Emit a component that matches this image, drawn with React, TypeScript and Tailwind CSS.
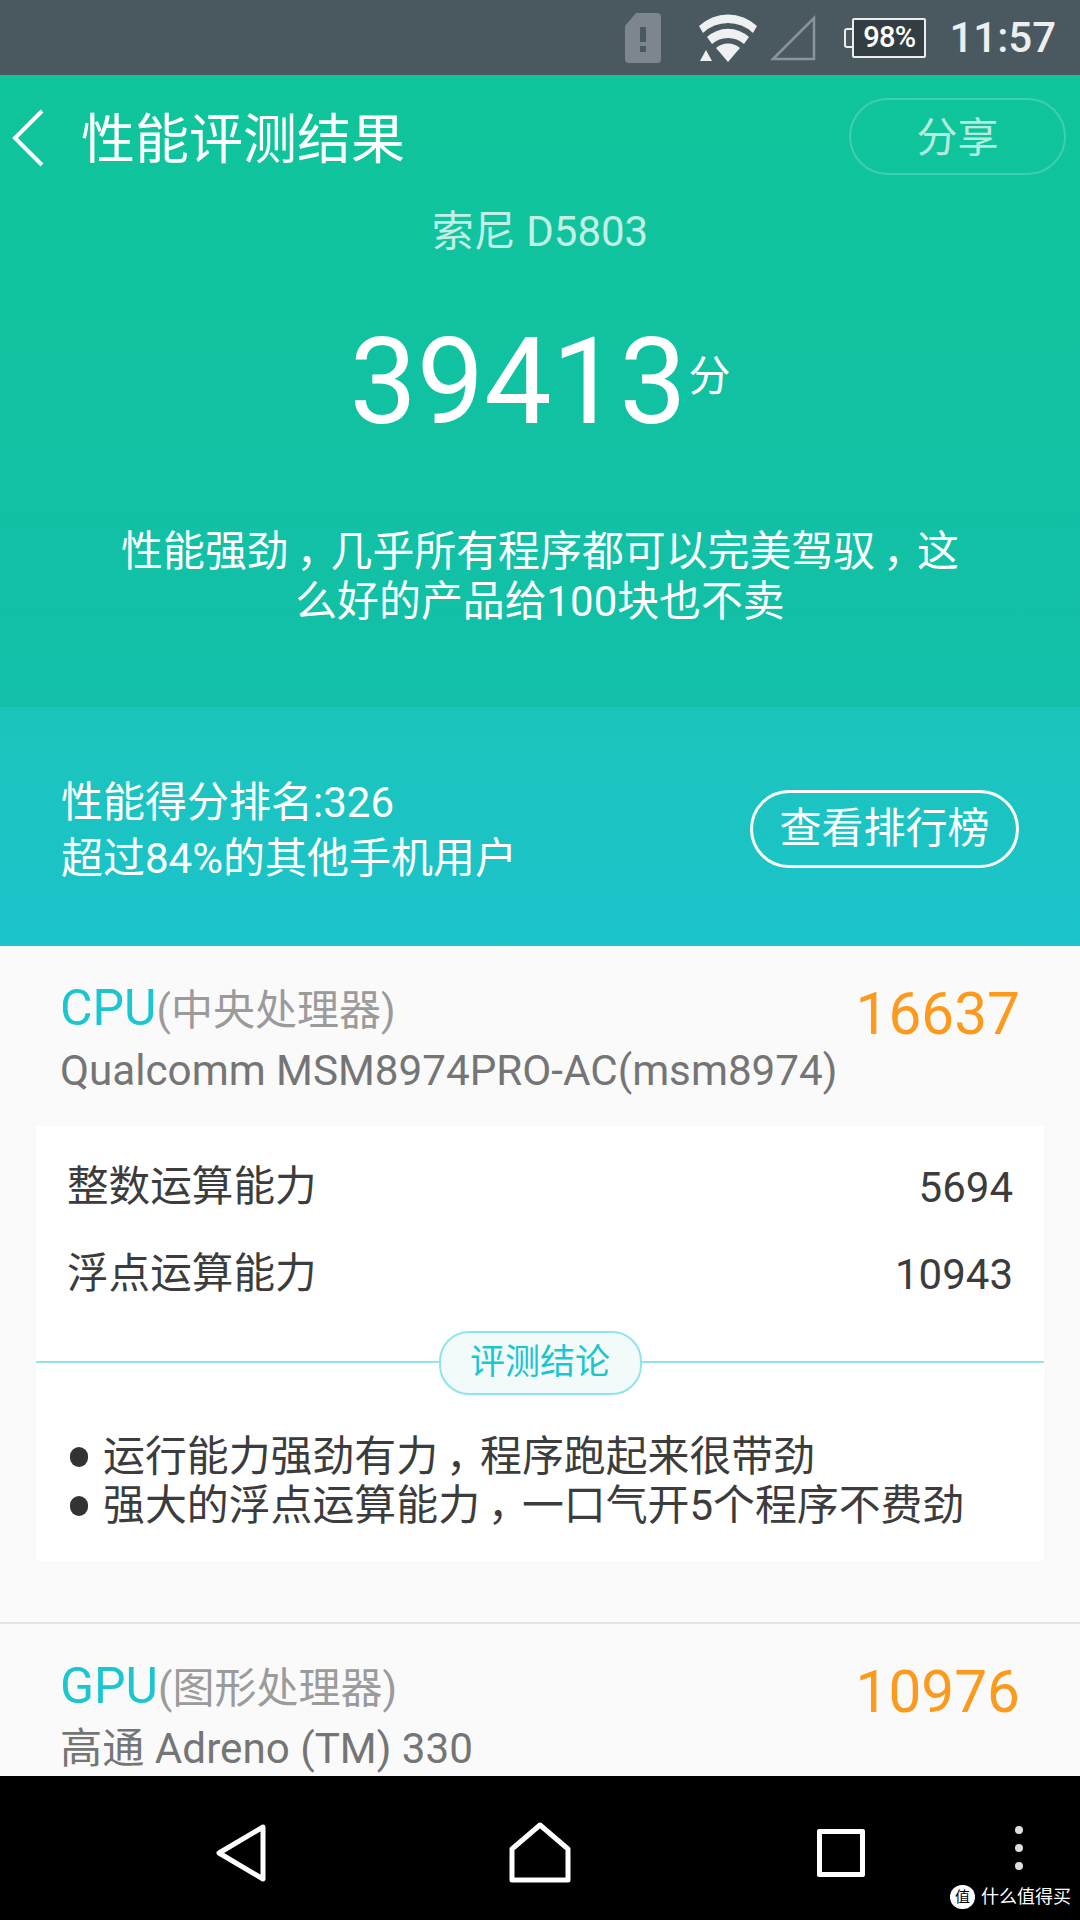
// the source draws the comma mid-cell, SC font puts it bottom-left
function Comma() {
  return <span className="inline-flex w-[1em] justify-center [font-feature-settings:'palt']">，</span>
}

function StatusBar() {
  return (
    <div className="h-[75px] bg-[#4a5860] flex items-center justify-end shrink-0 relative">
      {/* sim warning */}
      <svg width="38" height="52" viewBox="0 0 38 52" className="mr-[36px]">
        <path d="M12 1h21a4 4 0 0 1 4 4v42a4 4 0 0 1-4 4H5a4 4 0 0 1-4-4V14z" fill="#7d868f" />
        <rect x="16" y="15" width="6" height="15" fill="#4a5860" />
        <rect x="16" y="34" width="6" height="6" fill="#4a5860" />
      </svg>
      {/* wifi */}
      <svg width="60" height="50" viewBox="0 0 60 50" className="mr-[12px]">
        <path d="M1 13 A42 42 0 0 1 59 13 L55 20 A36 36 0 0 0 5 20Z" fill="#eef0f1" />
        <path d="M9 24 A31 31 0 0 1 51 24 L46 31 A24 24 0 0 0 14 31Z" fill="#eef0f1" />
        <path d="M18 35 A18 18 0 0 1 42 35 L30 49Z" fill="#eef0f1" />
        <path d="M2 48 L8 37 L14 48Z" fill="#eef0f1" />
      </svg>
      {/* signal */}
      <svg width="46" height="46" viewBox="0 0 46 46" className="mr-[28px]">
        <path d="M3 44 L44 3 V44Z" fill="none" stroke="#8a949a" strokeWidth="2.5" />
      </svg>
      {/* battery */}
      <div className="relative mr-[23px] flex items-center">
        <div className="w-[8px] h-[20px] border-2 border-r-0 border-white/90 rounded-l-[3px]" />
        <div className="w-[74px] h-[40px] bg-[#333e44] border-2 border-white/90 rounded-[2px] flex items-center justify-center text-white text-[29px] font-medium leading-none tracking-tight">
          98%
        </div>
      </div>
      <div className="text-[#eceeef] text-[42px] font-medium leading-none mr-[24px]">11:57</div>
    </div>
  )
}

function Header() {
  return (
    <div className="h-[632px] shrink-0 bg-linear-to-b from-[#0fc59a] to-[#13bfa9] text-white">
      <div className="h-[112px] pt-[23px] pl-[11px] pr-[14px] flex items-start justify-between">
        <div className="flex items-start">
          <svg width="34" height="58" viewBox="0 0 34 58" className="mt-[11px]">
            <path d="M31 2 L4 29 L31 56" fill="none" stroke="white" strokeWidth="4" />
          </svg>
          <div className="ml-[36px] text-[54px] leading-[58px] mt-[14px]">性能评测结果</div>
        </div>
        <div className="w-[217px] h-[77px] rounded-full border-2 border-white/20 flex items-center justify-center text-[41px] text-white/70 pt-[4px]">
          分享
        </div>
      </div>
      <div className="text-center text-[42px] leading-[48px] text-white/75 mt-[21px]">索尼 D5803</div>
      <div className="flex items-start justify-center mt-[56px] h-[140px]">
        <span className="text-[120px] leading-[140px]">39413</span>
        <span className="text-[42px] leading-[48px] mt-[41px] ml-[2px]">分</span>
      </div>
      <div className="mt-[75px] text-center text-[41.9px] leading-[50px]">
        <div>性能强劲<Comma />几乎所有程序都可以完美驾驭<Comma />这</div>
        <div>么好的产品给100块也不卖</div>
      </div>
    </div>
  )
}

function RankBand() {
  return (
    <div className="h-[239px] shrink-0 bg-linear-to-b from-[#1cc5ba] to-[#1bc3cc] flex items-center justify-between pl-[61px] pr-[61px] text-white">
      <div className="text-[42px] leading-[56px] mt-[8px]">
        <div>性能得分排名:326</div>
        <div>超过84%的其他手机用户</div>
      </div>
      <div className="w-[269px] h-[78px] rounded-full border-[3px] border-white flex items-center justify-center text-[42px] mt-[4px]">
        查看排行榜
      </div>
    </div>
  )
}

function SectionHead({ name, sub, model, score }: { name: string; sub: string; model: string; score: string }) {
  return (
    <div className="flex items-start justify-between pl-[60px] pr-[60px]">
      <div>
        <div className="flex items-baseline h-[62px]">
          <span className="text-[50px] leading-[62px] text-[#1cc6cf]">{name}</span>
          <span className="text-[42px] leading-[62px] text-[#9b9b9b]">{sub}</span>
        </div>
        <div className="text-[42.2px] leading-[50px] text-[#757575] mt-[7px]">{model}</div>
      </div>
      <div className="text-[58.5px] leading-[68px] text-[#fb9a1c] mt-[3px]">{score}</div>
    </div>
  )
}

function ScoreRow({ label, value }: { label: string; value: string }) {
  return (
    <div className="h-[87px] flex items-center justify-between pl-[31px] pr-[31px] text-[41.6px] text-[#3c3c3c]">
      <span>{label}</span>
      <span className="text-[42px]">{value}</span>
    </div>
  )
}

export default function App() {
  return (
    <div
      className="w-[1080px] h-[1920px] overflow-hidden flex flex-col bg-[#fafafa]"
      style={{ fontFamily: 'Roboto, "Noto Sans CJK SC", sans-serif' }}
    >
      <StatusBar />
      <div className="flex-1 min-h-0 overflow-hidden flex flex-col">
        <Header />
        <RankBand />
        <div className="pt-[31px]">
          <SectionHead name="CPU" sub="(中央处理器)" model="Qualcomm MSM8974PRO-AC(msm8974)" score="16637" />
          <div className="mx-[36px] mt-[30px] h-[435px] bg-white pt-[18px]">
            <ScoreRow label="整数运算能力" value="5694" />
            <ScoreRow label="浮点运算能力" value="10943" />
            <div className="relative h-[64px] mt-[13px] flex items-center justify-center">
              <div className="absolute left-0 right-0 top-[30px] h-[2px] bg-[#8fe5e8]" />
              <div className="relative w-[203px] h-[64px] rounded-[30px] border-2 border-[#8fe5e8] bg-[#f3fafa] flex items-center justify-center text-[35px] text-[#1cc6cf]">
                评测结论
              </div>
            </div>
            <div className="mt-[37px] text-[41.9px] leading-[49px] text-[#3c3c3c] pl-[34px]">
              <div className="flex items-center">
                <span className="w-[18px] h-[20px] rounded-full bg-[#333] mr-[15px]" />
                <span>运行能力强劲有力<Comma />程序跑起来很带劲</span>
              </div>
              <div className="flex items-center">
                <span className="w-[18px] h-[20px] rounded-full bg-[#333] mr-[15px]" />
                <span>强大的浮点运算能力<Comma />一口气开5个程序不费劲</span>
              </div>
            </div>
          </div>
          <div className="mt-[61px] border-t-2 border-[#e4e4e4] pt-[31px]">
            <SectionHead name="GPU" sub="(图形处理器)" model="高通 Adreno (TM) 330" score="10976" />
          </div>
        </div>
      </div>
      <div className="h-[144px] shrink-0 bg-black relative flex items-start">
        <svg width="52" height="60" viewBox="0 0 52 60" className="ml-[215px] mt-[47px]">
          <path d="M48 4 L4 30 L48 56Z" fill="none" stroke="white" strokeWidth="5" strokeLinejoin="round" />
        </svg>
        <svg width="62" height="62" viewBox="0 0 62 62" className="ml-[242px] mt-[45px]">
          <path d="M31 4 L59 28 V59 H3 V28Z" fill="none" stroke="white" strokeWidth="5" strokeLinejoin="round" />
        </svg>
        <div className="ml-[246px] mt-[53px] w-[48px] h-[48px] border-[5px] border-white rounded-[2px]" />
        <div className="ml-[150px] mt-[50px] flex flex-col gap-[10px]">
          <span className="w-[8px] h-[8px] rounded-full bg-[#ddd]" />
          <span className="w-[8px] h-[8px] rounded-full bg-[#ddd]" />
          <span className="w-[8px] h-[8px] rounded-full bg-[#ddd]" />
        </div>
        <div className="absolute left-[950px] top-[109px] flex items-center">
          <span className="w-[25px] h-[24px] rounded-full bg-white text-black text-[15px] leading-[24px] text-center">值</span>
          <span className="ml-[6px] text-[18px] leading-[24px] text-white">什么值得买</span>
        </div>
      </div>
    </div>
  )
}
